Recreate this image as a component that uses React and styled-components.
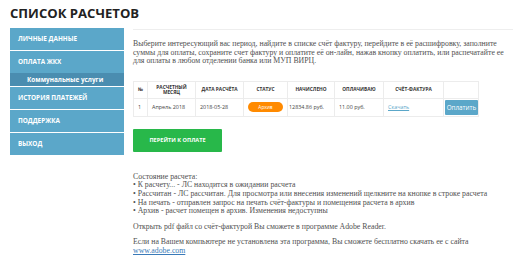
import React from "react";
import styled, { createGlobalStyle } from "styled-components";

const Global = createGlobalStyle`
  html, body { margin: 0; padding: 0; background: #fff; }
  body { font-family: "Open Sans", "Liberation Sans", sans-serif; }
`;

const Page = styled.div`
  width: 521px;
  height: 260px;
  padding: 0 0 0 10px;
  box-sizing: border-box;
  overflow: hidden;
`;

const Title = styled.h1`
  margin: 0;
  padding-top: 4px;
  height: 28px;
  box-sizing: border-box;
  font-family: "Open Sans", sans-serif;
  font-weight: 700;
  font-size: 13.1px;
  line-height: 18px;
  color: #222;
`;

const Layout = styled.div`
  display: grid;
  grid-template-columns: 114px 380px;
  column-gap: 9px;
  align-items: start;
`;

const Menu = styled.nav`
  display: flex;
  flex-direction: column;
`;

const MenuItem = styled.div`
  background: #5ba7c9;
  color: #fff;
  font-weight: 700;
  font-size: 6.4px;
  text-transform: uppercase;
  height: 22px;
  line-height: 22px;
  padding-left: 8px;
  border-top: ${(p) => (p.$first ? "none" : "1px solid #fff")};
`;

const SubItem = styled.div`
  background: #4a8db0;
  color: #fff;
  font-weight: 700;
  font-size: 6.4px;
  height: 13px;
  line-height: 13px;
  padding-left: 17px;
`;

const Content = styled.main`
  margin-top: 1px;
  border-top: 1px solid #eeeeee;
  padding-top: 10px;
`;

const Paragraph = styled.p`
  margin: 0 0 ${(p) => p.$mb || 0}px;
  font-family: "Liberation Serif", serif;
  font-size: 7.8px;
  line-height: 8.6px;
  color: #505050;
  width: 392px;
`;

const Table = styled.table`
  margin-top: 15px;
  border-collapse: collapse;
  table-layout: fixed;
  width: 345px;
  font-family: "Open Sans", sans-serif;
`;

const Th = styled.th`
  border: 1px solid #ececec;
  height: 16px;
  padding: 0 2px;
  font-size: 4.8px;
  line-height: 5px;
  font-weight: 700;
  text-transform: uppercase;
  color: #333;
  text-align: center;
`;

const Td = styled.td`
  border: 1px solid #ececec;
  height: 17px;
  padding: 0 ${(p) => (p.$tight ? 1 : 4)}px;
  font-size: 5.4px;
  color: #444;
  text-align: ${(p) => p.$align || "left"};
  white-space: nowrap;
`;

const Pill = styled.span`
  display: inline-block;
  width: 35px;
  height: 10px;
  line-height: 10px;
  border-radius: 5px;
  background: #ff8a00;
  color: #fff;
  font-size: 4.8px;
  text-align: center;
`;

const Link = styled.a`
  color: ${(p) => p.$color || "#5ba7c9"};
  text-decoration: underline;
`;

const PayButton = styled.button`
  display: block;
  width: 33px;
  height: 15px;
  margin-left: auto;
  border: none;
  border-radius: 1px;
  background: #5ba7c9;
  color: #fff;
  font-family: "Open Sans", sans-serif;
  font-size: 6.3px;
  padding: 0;
`;

const GoButton = styled.button`
  display: block;
  margin-top: 12px;
  width: 89px;
  height: 23px;
  border: none;
  border-radius: 1px;
  background: #28b84a;
  color: #fff;
  font-family: "Open Sans", sans-serif;
  font-weight: 700;
  font-size: 5.6px;
  text-transform: uppercase;
  padding: 0;
`;

const Notes = styled.div`
  margin-top: 21px;
`;

const cols = [14, 48, 48, 44, 47, 49, 60, 35];

export default function App() {
  return (
    <>
      <Global />
      <Page>
        <Title>СПИСОК РАСЧЕТОВ</Title>
        <Layout>
          <Menu>
            <MenuItem $first>Личные данные</MenuItem>
            <MenuItem>Оплата ЖКХ</MenuItem>
            <SubItem>Коммунальные услуги</SubItem>
            <MenuItem>История платежей</MenuItem>
            <MenuItem>Поддержка</MenuItem>
            <MenuItem>Выход</MenuItem>
          </Menu>
          <Content>
            <Paragraph>
              Выберите интересующий вас период, найдите в списке счёт фактуру, перейдите в её расшифровку, заполните
              <br />
              суммы для оплаты, сохраните счет фактуру и оплатите её он-лайн, нажав кнопку оплатить, или распечатайте ее
              <br />
              для оплаты в любом отделении банка или МУП ВИРЦ.
            </Paragraph>
            <Table>
              <colgroup>
                {cols.map((w, i) => (
                  <col key={i} style={{ width: w }} />
                ))}
              </colgroup>
              <thead>
                <tr>
                  <Th>№</Th>
                  <Th>Расчетный месяц</Th>
                  <Th>Дата расчёта</Th>
                  <Th>Статус</Th>
                  <Th>Начислено</Th>
                  <Th>Оплачиваю</Th>
                  <Th>Счёт-фактура</Th>
                  <Th />
                </tr>
              </thead>
              <tbody>
                <tr>
                  <Td>1</Td>
                  <Td>Апрель 2018</Td>
                  <Td>2018-05-28</Td>
                  <Td $align="center" $tight>
                    <Pill>Архив</Pill>
                  </Td>
                  <Td $tight>12834.86 руб.</Td>
                  <Td>11.00 руб.</Td>
                  <Td>
                    <Link href="#">Скачать</Link>
                  </Td>
                  <Td $tight>
                    <PayButton>Оплатить</PayButton>
                  </Td>
                </tr>
              </tbody>
            </Table>
            <GoButton>Перейти к оплате</GoButton>
            <Notes>
              <Paragraph $mb={7}>
                Состояние расчета:
                <br />• К расчету... - ЛС находится в ожидании расчета
                <br />• Рассчитан - ЛС рассчитан. Для просмотра или внесения изменений щелкните на кнопке в строке расчета
                <br />• На печать - отправлен запрос на печать счёт-фактуры и помещения расчета в архив
                <br />• Архив - расчет помещен в архив. Изменения недоступны
              </Paragraph>
              <Paragraph $mb={7}>
                Открыть pdf файл со счёт-фактурой Вы сможете в программе Adobe Reader.
              </Paragraph>
              <Paragraph>
                Если на Вашем компьютере не установлена эта программа, Вы сможете бесплатно скачать ее с сайта
                <br />
                <Link href="#" $color="#3a7ab8">www.adobe.com</Link>
              </Paragraph>
            </Notes>
          </Content>
        </Layout>
      </Page>
    </>
  );
}
